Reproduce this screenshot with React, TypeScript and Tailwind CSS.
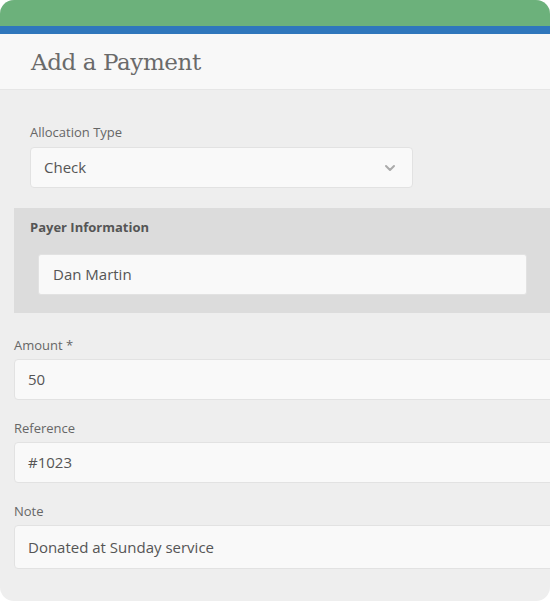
import { ChevronDown } from 'lucide-react'

const sans = { fontFamily: '"Open Sans", "Noto Sans", sans-serif' }

function Field({ label, value, className = 'h-[41px]' }: { label: string; value: string; className?: string }) {
  return (
    <div>
      <label className="block text-[13px] text-[#666] leading-[18px] mb-[5px]">{label}</label>
      <div className={`w-[560px] ${className} flex items-center px-[13px] bg-[#f9f9f9] border border-[#e2e2e2] rounded-[4px] text-[15px] text-[#555]`}>
        {value}
      </div>
    </div>
  )
}

export default function App() {
  return (
    <div className="w-[550px] h-[602px] bg-white" style={sans}>
      <div className="w-[550px] h-[601px] rounded-[14px] overflow-hidden bg-[#eeeeee] flex flex-col">
        {/* barres du haut */}
        <div className="h-[26px] bg-[#6cb17b] shrink-0" />
        <div className="h-[8px] bg-[#2f77bc] shrink-0" />

        {/* En-tête */}
        <div className="h-[56px] shrink-0 bg-[#f8f8f8] border-b border-[#e6e6e6] flex items-center pl-[31px] pt-[2px]">
          <h1 className="text-[23px] font-light text-[#6a6a6a] tracking-[-0.4px]" style={{ fontFamily: '"DejaVu Serif", serif' }}>
            Add a Payment
          </h1>
        </div>

        {/* Corps */}
        <div className="pt-[33px] pl-[14px]">
          <div className="pl-[16px]">
            <label className="block text-[13px] text-[#666] leading-[18px] mb-[6px]">Allocation Type</label>
            <div className="w-[383px] h-[41px] flex items-center justify-between pl-[13px] pr-[14px] bg-[#f9f9f9] border border-[#e2e2e2] rounded-[4px] text-[15px] text-[#555]">
              <span>Check</span>
              <ChevronDown className="w-4 h-4 text-[#aaa]" strokeWidth={3} />
            </div>
          </div>

          {/* Payeur */}
          <div className="mt-[20px] h-[105px] bg-[#dcdcdc] pl-[16px] pr-[23px] pt-[10px]">
            <div className="text-[13px] font-bold text-[#555] leading-[18px]">Payer Information</div>
            <div className="mt-[18px] ml-[8px] h-[41px] flex items-center px-[14px] bg-[#f9f9f9] border border-[#e2e2e2] rounded-[3px] text-[15px] text-[#555]">
              Dan Martin
            </div>
          </div>

          <div className="mt-[23px] flex flex-col gap-[19px]">
            <Field label="Amount *" value="50" />
            <Field label="Reference" value="#1023" />
            <Field label="Note" value="Donated at Sunday service" className="h-[44px]" />
          </div>
        </div>
      </div>
    </div>
  )
}
